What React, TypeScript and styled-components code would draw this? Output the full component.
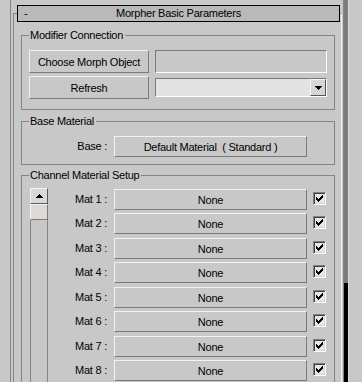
import styled, { createGlobalStyle } from "styled-components";

const MAT_COUNT = 8;

export default function App() {
  const mats = Array.from({ length: MAT_COUNT }, (_, i) => i + 1);

  return (
    <>
      <GlobalStyle />
      <Page>
        <Panel>
          <Rollout>
            <TitleBar>
              <Collapse>-</Collapse>
              <Title>Morpher Basic Parameters</Title>
              <span />
            </TitleBar>

            <Group $gap={7}>
              <GroupHead>
                <GroupLabel>Modifier Connection</GroupLabel>
              </GroupHead>
              <GroupBody>
                <ConnectionGrid>
                  <MaxButton>Choose Morph Object</MaxButton>
                  <TextField />
                  <MaxButton>Refresh</MaxButton>
                  <Dropdown>
                    <DropArrow>
                      <Arrow dir="down" />
                    </DropArrow>
                  </Dropdown>
                </ConnectionGrid>
              </GroupBody>
            </Group>

            <Group $gap={5}>
              <GroupHead>
                <GroupLabel>Base Material</GroupLabel>
              </GroupHead>
              <GroupBody $bottom={7}>
                <FieldRow>
                  <FieldLabel>Base :</FieldLabel>
                  <SlotButton>Default Material&nbsp;&nbsp;( Standard )</SlotButton>
                  <CheckSpacer />
                </FieldRow>
              </GroupBody>
            </Group>

            <Group $gap={4}>
              <GroupHead>
                <GroupLabel>Channel Material Setup</GroupLabel>
              </GroupHead>
              <GroupBody $top={6} $bottom={0} $open>
                <ChannelBody>
                  <ListScroll>
                    <ScrollArrow>
                      <Arrow dir="up" />
                    </ScrollArrow>
                    <ScrollTrack>
                      <ScrollThumb />
                    </ScrollTrack>
                  </ListScroll>
                  <MatList>
                    {mats.map((n) => (
                      <MatRow key={n}>
                        <FieldLabel>Mat {n} :</FieldLabel>
                        <SlotButton>None</SlotButton>
                        <CheckBox>
                          <CheckMark />
                        </CheckBox>
                      </MatRow>
                    ))}
                  </MatList>
                </ChannelBody>
              </GroupBody>
            </Group>
          </Rollout>
        </Panel>
        <PanelScroll>
          <PanelThumb />
        </PanelScroll>
        <Filler />
      </Page>
    </>
  );
}

function Arrow({ dir }: { dir: "up" | "down" }) {
  return (
    <svg width="7" height="4" viewBox="0 0 7 4" shapeRendering="crispEdges">
      {dir === "down" ? <path d="M0 0h7L3.5 4z" fill="#000" /> : <path d="M0 4h7L3.5 0z" fill="#000" />}
    </svg>
  );
}

function CheckMark() {
  return (
    <svg width="7" height="7" viewBox="0 0 7 7" shapeRendering="crispEdges">
      <path
        d="M0 2h1v3h-1z M1 3h1v3h-1z M2 4h1v3h-1z M3 3h1v3h-1z M4 2h1v3h-1z M5 1h1v3h-1z M6 0h1v3h-1z"
        fill="#000"
      />
    </svg>
  );
}

const bg = "#c8c8c8";
const shade = "#858585";

const GlobalStyle = createGlobalStyle`
  html, body {
    margin: 0;
    padding: 0;
    background: ${bg};
    overflow: hidden;
  }
  body {
    font-family: "Liberation Sans", Arial, sans-serif;
    font-size: 11px;
    letter-spacing: -0.25px;
    color: #000;
  }
`;

const Page = styled.div`
  display: flex;
  width: 362px;
  height: 382px;
  overflow: hidden;
  background: ${bg};
`;

const Panel = styled.div`
  display: flex;
  flex-direction: column;
  width: 334px;
  box-sizing: border-box;
  margin-left: 10px;
  border-left: 1px solid ${shade};
  border-right: 1px solid ${shade};
`;

const Rollout = styled.div`
  flex: 1;
  display: flex;
  flex-direction: column;
  margin: 13px 1px 0 2px;
  border-top: 1px solid ${shade};
  border-left: 1px solid ${shade};
  border-right: 1px solid #f4f4f4;
`;

const TitleBar = styled.div`
  display: grid;
  grid-template-columns: 1fr auto 1fr;
  align-items: center;
  height: 17px;
  box-sizing: border-box;
  margin: -9px 1px 0 3px;
  padding: 0 6px;
  border: 1px solid #000;
  background: #b9b9b9;
`;

const Collapse = styled.span`
  line-height: 13px;
`;

const Title = styled.span`
  line-height: 13px;
`;

const Group = styled.section<{ $gap: number }>`
  display: flex;
  flex-direction: column;
  margin: ${(p) => p.$gap}px 6px 0 7px;
`;

const GroupHead = styled.div`
  display: flex;
  height: 13px;

  &::before,
  &::after {
    content: "";
    align-self: flex-end;
    height: 7px;
    box-sizing: border-box;
    border-top: 1px solid ${shade};
  }
  &::before {
    width: 8px;
    border-left: 1px solid ${shade};
  }
  &::after {
    flex: 1;
    border-right: 1px solid ${shade};
  }
`;

const GroupLabel = styled.span`
  padding: 0 2px 0 1px;
  line-height: 13px;
  white-space: nowrap;
`;

const GroupBody = styled.div<{ $top?: number; $bottom?: number; $open?: boolean }>`
  padding: ${(p) => p.$top ?? 8}px 7px ${(p) => p.$bottom ?? 10}px;
  border: 1px solid ${shade};
  border-top: none;
  ${(p) => (p.$open ? "border-bottom: none;" : "")}
`;

const ConnectionGrid = styled.div`
  display: grid;
  grid-template-columns: 120px 1fr;
  grid-auto-rows: 23px;
  column-gap: 6px;
  row-gap: 3px;
  align-items: center;
`;

const MaxButton = styled.div`
  display: flex;
  align-items: center;
  justify-content: center;
  height: 23px;
  box-sizing: border-box;
  border: 1px solid;
  border-color: #f2f2f2 #7a7a7a #7a7a7a #f2f2f2;
  background: ${bg};
  white-space: nowrap;
`;

const TextField = styled.div`
  height: 23px;
  box-sizing: border-box;
  border: 1px solid;
  border-color: #7a7a7a #fff #fff #7a7a7a;
  background: ${bg};
`;

const Dropdown = styled.div`
  display: flex;
  justify-content: flex-end;
  height: 19px;
  box-sizing: border-box;
  border: 1px solid;
  border-color: #7a7a7a #fff #fff #7a7a7a;
  background: #e2e2e2;
`;

const DropArrow = styled.div`
  display: flex;
  align-items: center;
  justify-content: center;
  width: 16px;
  box-sizing: border-box;
  border: 1px solid;
  border-color: #f4f4f4 #555 #555 #f4f4f4;
  background: #d6d6d6;
`;

const FieldRow = styled.div`
  display: flex;
  align-items: center;
`;

const FieldLabel = styled.div`
  flex: 1;
  text-align: right;
  white-space: nowrap;
  line-height: 13px;
`;

const SlotButton = styled(MaxButton)`
  flex: none;
  width: 193px;
  height: 21px;
  margin-left: 7px;
`;

const CheckSpacer = styled.div`
  width: 20px;
`;

const ChannelBody = styled.div`
  display: flex;
  height: 400px;
`;

const ListScroll = styled.div`
  display: flex;
  flex-direction: column;
  width: 18px;
  margin-left: 1px;
`;

const ScrollArrow = styled.div`
  display: flex;
  align-items: center;
  justify-content: center;
  height: 16px;
  box-sizing: border-box;
  border: 1px solid;
  border-color: #f4f4f4 #5a5a5a #5a5a5a #f4f4f4;
  background: #d8d8d8;
`;

const ScrollTrack = styled.div`
  flex: 1;
  border-left: 1px solid ${shade};
  border-right: 1px solid ${shade};
`;

const ScrollThumb = styled.div`
  height: 16px;
  margin: 0 -1px;
  box-sizing: border-box;
  border: 1px solid;
  border-color: #f4f4f4 #7a7a7a #7a7a7a #f4f4f4;
  background: #dcd9d6;
`;

const MatList = styled.div`
  flex: 1;
  display: flex;
  flex-direction: column;
  padding-top: 1px;
`;

const MatRow = styled.div`
  display: flex;
  align-items: flex-start;
  height: 24px;
  padding-right: 1px;

  &:nth-child(even) {
    height: 25px;
  }

  & > ${FieldLabel} {
    padding-top: 4px;
  }
`;

const CheckBox = styled.div`
  display: flex;
  align-items: center;
  justify-content: center;
  width: 13px;
  height: 13px;
  box-sizing: border-box;
  margin: 3px 0 0 6px;
  border: 1px solid;
  border-color: #808080 #fff #fff #808080;
  box-shadow: inset 1px 1px 0 #404040, inset -1px -1px 0 #d8d8d8;
  background: #e6e6e6;
`;

const PanelScroll = styled.div`
  display: flex;
  flex-direction: column;
  width: 4px;
  background: #7c7c7c;
`;

const PanelThumb = styled.div`
  margin-top: 283px;
  flex: 1;
  background: #000;
`;

const Filler = styled.div`
  flex: 1;
  border-left: 1px solid #dcdcdc;
`;
